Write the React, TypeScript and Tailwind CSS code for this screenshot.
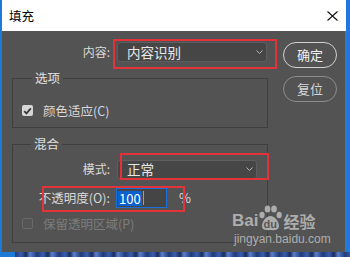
import React from "react";

function Chevron() {
  return (
    <svg width="7" height="4" viewBox="0 0 7 4" className="shrink-0">
      <path d="M0.5 0.5 L3.5 3.5 L6.5 0.5" fill="none" stroke="#b5b5b5" strokeWidth="1" />
    </svg>
  );
}

function Select({ text, w, h }: { text: string; w: string; h: string }) {
  return (
    <div
      className={`${w} ${h} flex items-center justify-between rounded-[3px] border border-[#5e5e5e] bg-[#464646] pl-[9px] pr-[3px]`}
    >
      <span className="text-[13.5px] leading-[16px] text-[#e8e8e8]">{text}</span>
      <Chevron />
    </div>
  );
}

export default function App() {
  return (
    <div className="relative flex h-[257px] w-[350px] flex-col overflow-hidden bg-[#1d7ad6] font-['Noto_Sans_CJK_SC','Microsoft_YaHei',sans-serif]">
      <div className="flex h-[252px]">
        <div className="ml-[2px] flex w-[344px] flex-col">
          {/* title bar */}
          <div className="flex h-[31px] items-center justify-between bg-white pl-[7px] pr-[8px]">
            <span className="text-[12.5px] leading-[16px] text-black">填充</span>
            <svg width="11" height="10" viewBox="0 0 11 10">
              <path d="M0.5 0.5 L10.5 9.5 M10.5 0.5 L0.5 9.5" stroke="#111" strokeWidth="1.1" fill="none" />
            </svg>
          </div>
          {/* body */}
          <div className="flex flex-1 gap-[15px] border-r border-[#6e6e6e] bg-[#535353] pl-[10px] pt-[11px] text-[12px] leading-[16px] text-[#d9d9d9]">
            <div className="flex w-[256px] flex-col">
              {/* content row */}
              <div className="flex h-[20px] items-center">
                <span className="w-[98px] text-right">内容:</span>
                <div className="ml-[7px]">
                  <Select text="内容识别" w="w-[150px]" h="h-[20px]" />
                </div>
              </div>
              {/* options group */}
              <div className="relative mt-[16px] h-[50px] border border-[#3f3f3f]">
                <span className="absolute left-[19px] top-[-9px] bg-[#535353] px-[3px] text-[12.5px] leading-[16px] text-[#e0e0e0]">
                  选项
                </span>
                <div className="flex h-[11px] items-center pl-[9px] mt-[26px]">
                  <div className="flex h-[11px] w-[11px] items-center justify-center rounded-[2px] bg-[#d6d6d6]">
                    <svg width="9" height="8" viewBox="0 0 9 8">
                      <path d="M1.2 4.2 L3.5 6.4 L7.8 1.4" fill="none" stroke="#3a3a3a" strokeWidth="1.8" />
                    </svg>
                  </div>
                  <span className="ml-[10px] text-[12.5px]">
                    颜色适应<span className="text-[#c9d6ea]">(C)</span>
                  </span>
                </div>
              </div>
              {/* blend group */}
              <div className="relative mt-[16px] h-[99px] border border-[#3f3f3f]">
                <span className="absolute left-[18px] top-[-9px] bg-[#535353] px-[3px] text-[12.5px] leading-[16px] text-[#e0e0e0]">
                  混合
                </span>
                <div className="mt-[14px] flex h-[20px] items-center">
                  <span className="w-[97px] text-right">模式:</span>
                  <div className="ml-[7px]">
                    <Select text="正常" w="w-[140px]" h="h-[19px]" />
                  </div>
                </div>
                <div className="mt-[9px] flex h-[20px] items-center">
                  <span className="w-[97px] text-right text-[12.5px]">不透明度(O):</span>
                  <div className="ml-[6px] flex h-[20px] w-[51px] items-center border-[1.5px] border-[#1b6fd8] bg-[#454545] pl-[1px]">
                    <span className="bg-[#0a62cf] px-[1px] text-[13px] leading-[15px] text-white">100</span>
                    <span className="ml-[1px] h-[14px] w-[1px] bg-[#f08a24]" />
                  </div>
                  <span className="ml-[12px] text-[13px] text-[#dcdcdc]">%</span>
                </div>
                <div className="mt-[10px] flex h-[11px] items-center pl-[9px]">
                  <div className="h-[11px] w-[11px] rounded-[2px] border border-[#696969] bg-[#555555]" />
                  <span className="ml-[10px] text-[12.5px] text-[#7c7c7c]">保留透明区域(P)</span>
                </div>
              </div>
            </div>
            {/* buttons */}
            <div className="flex w-[54px] flex-col gap-[8px]">
              <div className="flex h-[26px] items-center justify-center rounded-full border-[1.5px] border-[#d2d2d2] text-[13px] text-[#f0f0f0]">
                确定
              </div>
              <div className="flex h-[26px] items-center justify-center rounded-full border-[1.5px] border-[#8d8d8d] text-[13px] text-[#d6d6d6]">
                复位
              </div>
            </div>
          </div>
        </div>
      </div>
      {/* bottom strip */}
      <div className="ml-[15px] h-[5px] bg-[repeating-linear-gradient(90deg,#203a78_0px,#3a5fb0_6px,#1a2c5c_11px,#5a7fcc_15px,#203a78_22px)]" />

      {/* annotation overlays */}
      <div className="pointer-events-none absolute left-[113px] top-[39px] h-[30px] w-[164px] border-2 border-[#e2333a]" />
      <div className="pointer-events-none absolute left-[120px] top-[153px] h-[27px] w-[149px] border-2 border-[#e2333a]" />
      <div className="pointer-events-none absolute left-[42px] top-[186px] h-[26px] w-[143px] border-2 border-[#e2333a]" />

      {/* watermark */}
      <div className="pointer-events-none absolute left-[232px] top-[205px] flex flex-col items-start opacity-80">
        <div className="flex items-end">
          <span className="text-[17px] font-bold leading-[20px] text-[#c4c4c4] font-['Liberation_Sans',sans-serif]">Bai</span>
          <div className="relative mx-[1px] h-[26px] w-[23px]">
            <svg width="23" height="26" viewBox="0 0 23 26">
              <ellipse cx="3" cy="10" rx="2.6" ry="3.2" fill="#c4c4c4" />
              <ellipse cx="8.5" cy="4" rx="2.8" ry="3.6" fill="#c4c4c4" />
              <ellipse cx="15" cy="4" rx="2.8" ry="3.6" fill="#c4c4c4" />
              <ellipse cx="20.2" cy="10" rx="2.6" ry="3.2" fill="#c4c4c4" />
              <path d="M11.5 11 C7 11 3 17 3 21 C3 25 7 25.5 11.5 25 C16 25.5 20 25 20 21 C20 17 16 11 11.5 11 Z" fill="#c4c4c4" />
            </svg>
            <span className="absolute left-[4px] top-[13px] text-[11px] font-bold leading-[12px] text-[#5a5a5a] font-['Liberation_Sans',sans-serif]">
              du
            </span>
          </div>
          <span className="text-[16px] font-bold leading-[20px] text-[#c4c4c4]">经验</span>
        </div>
        <span className="ml-[2px] mt-[2px] text-[12px] leading-[13px] text-[#c4c4c4] font-['Liberation_Sans',sans-serif]">
          jingyan.baidu.com
        </span>
      </div>
    </div>
  );
}
